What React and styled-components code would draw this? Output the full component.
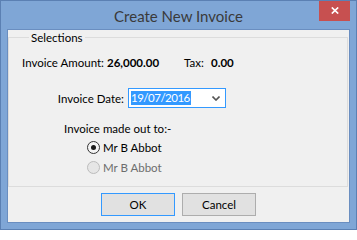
import React from "react";
import styled, { createGlobalStyle } from "styled-components";

const GlobalStyle = createGlobalStyle`
  html, body {
    margin: 0;
    padding: 0;
    background: #ffffff;
  }
  * {
    box-sizing: border-box;
  }
`;

const Window = styled.div`
  width: 357px;
  height: 230px;
  display: flex;
  flex-direction: column;
  background: #7fa6d6;
  border: 1px solid #5b80b3;
  padding: 0 6px 6px 6px;
  font-family: "Segoe UI", Lato, "Liberation Sans", sans-serif;
  font-size: 11.5px;
  color: #000;
`;

const TitleBar = styled.div`
  height: 28px;
  display: grid;
  grid-template-columns: 1fr auto 1fr;
  align-items: start;
`;

const Title = styled.div`
  grid-column: 2;
  margin-top: 6px;
  font-size: 15px;
  line-height: 18px;
  color: #3a3a3a;
  white-space: nowrap;
`;

const CloseButton = styled.div`
  grid-column: 3;
  justify-self: end;
  width: 31px;
  height: 20px;
  background: #c75050;
  display: flex;
  align-items: center;
  justify-content: center;
  padding-bottom: 1px;
`;

const Client = styled.div`
  flex: 1;
  display: flex;
  flex-direction: column;
  background: #f0f0f0;
  border: 1px solid #6a8ec0;
`;

const Group = styled.fieldset`
  margin: 0 1px 0 0;
  padding: 0 0 0 13px;
  height: 157px;
  border: 1px solid #dcdcdc;
  min-width: 0;
`;

const Legend = styled.legend`
  margin-left: 7px;
  padding: 0 2px;
  line-height: 15px;
`;

const AmountRow = styled.div`
  display: flex;
  align-items: center;
  height: 16px;
  margin-top: 9px;
`;

const Cell = styled.span`
  width: ${(p) => p.$w}px;
  flex: none;
  font-weight: ${(p) => (p.$bold ? 700 : 400)};
  white-space: nowrap;
`;

const DateRow = styled.div`
  display: flex;
  align-items: center;
  gap: 4px;
  margin-top: 18px;
`;

const DateLabel = styled.span`
  width: 102px;
  text-align: right;
  white-space: nowrap;
`;

const DatePicker = styled.div`
  width: 98px;
  height: 20px;
  display: flex;
  align-items: center;
  justify-content: space-between;
  background: #fff;
  border: 1px solid #3399ff;
  padding: 0 5px 0 2px;
`;

const Selected = styled.span`
  background: #3399ff;
  color: #fff;
  line-height: 14px;
  letter-spacing: -0.5px;
  padding-right: 1px;
`;

const MadeOut = styled.div`
  margin: 13px 0 1px 42px;
  line-height: 15px;
`;

const RadioRow = styled.label`
  display: flex;
  align-items: center;
  gap: 3px;
  height: 20px;
  margin-left: 65px;
  color: ${(p) => (p.$disabled ? "#6d6d6d" : "#000")};
`;

const RadioCircle = styled.span`
  width: 13px;
  height: 13px;
  border-radius: 50%;
  border: 1px solid ${(p) => (p.$disabled ? "#bcbcbc" : "#333")};
  background: ${(p) => (p.$disabled ? "#e6e6e6" : "#f4f4f4")};
  display: flex;
  align-items: center;
  justify-content: center;
  &::after {
    content: "";
    width: 5px;
    height: 5px;
    border-radius: 50%;
    background: ${(p) => (p.$checked ? "#1a1a1a" : "transparent")};
  }
`;

const ButtonRow = styled.div`
  flex: 1;
  display: flex;
  align-items: center;
  justify-content: center;
  gap: 7px;
`;

const Button = styled.button`
  width: 74px;
  height: 23px;
  padding: 0;
  font: inherit;
  color: #000;
  background: #e1e1e1;
  border: 1px solid ${(p) => (p.$default ? "#3399ff" : "#adadad")};
`;

const Chevron = () => (
  <svg width="8" height="5" viewBox="0 0 8 5">
    <path d="M0.5 0.5 L4 4 L7.5 0.5" fill="none" stroke="#555" strokeWidth="1.6" />
  </svg>
);

const CloseX = () => (
  <svg width="8" height="7" viewBox="0 0 8 7">
    <path d="M0.8 0.5 L7.2 6.5 M7.2 0.5 L0.8 6.5" stroke="#fff" strokeWidth="1.7" />
  </svg>
);

const App = () => {
  return (
    <>
      <GlobalStyle />
      <Window>
        <TitleBar>
          <Title>Create New Invoice</Title>
          <CloseButton>
            <CloseX />
          </CloseButton>
        </TitleBar>
        <Client>
          <Group>
            <Legend>Selections</Legend>
            <AmountRow>
              <Cell $w={85}>Invoice Amount:</Cell>
              <Cell $w={77} $bold>
                26,000.00
              </Cell>
              <Cell $w={27}>Tax:</Cell>
              <Cell $w={40} $bold>
                0.00
              </Cell>
            </AmountRow>
            <DateRow>
              <DateLabel>Invoice Date:</DateLabel>
              <DatePicker>
                <Selected>19/07/2016</Selected>
                <Chevron />
              </DatePicker>
            </DateRow>
            <MadeOut>Invoice made out to:-</MadeOut>
            <RadioRow>
              <RadioCircle $checked />
              Mr B Abbot
            </RadioRow>
            <RadioRow $disabled>
              <RadioCircle $disabled />
              Mr B Abbot
            </RadioRow>
          </Group>
          <ButtonRow>
            <Button $default>OK</Button>
            <Button>Cancel</Button>
          </ButtonRow>
        </Client>
      </Window>
    </>
  );
};

export default App;
